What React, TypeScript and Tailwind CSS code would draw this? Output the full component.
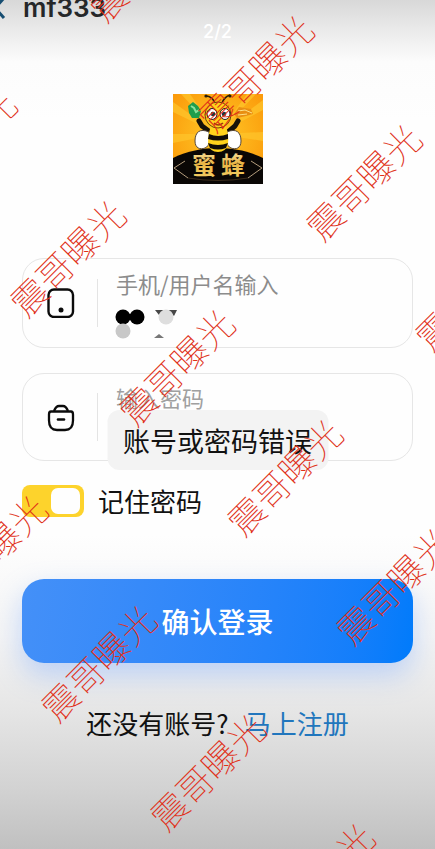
import { useState } from "react";

const watermarkSpots = [
  { x: 145, y: -38 },
  { x: 254, y: 72 },
  { x: 362, y: 181 },
  { x: 471, y: 291 },
  { x: -43, y: 147 },
  { x: 66, y: 257 },
  { x: 175, y: 366 },
  { x: 283, y: 476 },
  { x: 392, y: 585 },
  { x: -12, y: 552 },
  { x: 97, y: 662 },
  { x: 206, y: 771 },
  { x: 315, y: 880 },
];

function Watermarks() {
  return (
    <div aria-hidden="true" className="pointer-events-none absolute inset-0 z-20 overflow-hidden">
      {watermarkSpots.map((spot) => (
        <span
          key={`${spot.x}-${spot.y}`}
          style={{ left: spot.x, top: spot.y }}
          className="absolute -translate-x-1/2 -translate-y-1/2 -rotate-45 text-[36px] leading-none font-thin whitespace-nowrap text-[#e03018]"
        >
          震哥曝光
        </span>
      ))}
    </div>
  );
}

function BeeLogo() {
  return (
    <svg viewBox="0 0 90 90" className="size-[90px]" role="img" aria-label="蜜蜂">
      <defs>
        <radialGradient id="sky" cx="50%" cy="45%" r="65%">
          <stop offset="0" stopColor="#ffc928" />
          <stop offset="1" stopColor="#fb9a0a" />
        </radialGradient>
        <linearGradient id="gold" x1="0" y1="0" x2="0" y2="1">
          <stop offset="0" stopColor="#fff3c4" />
          <stop offset="0.5" stopColor="#e9b545" />
          <stop offset="1" stopColor="#f6d36b" />
        </linearGradient>
      </defs>
      <rect width="90" height="90" fill="url(#sky)" />
      <g fill="#ffc62c" opacity="0.7">
        <path d="M45 40 0 8v10z" />
        <path d="M45 40 8 0h9z" />
        <path d="M45 40 0 40v9z" />
        <path d="M45 40 90 6v10z" />
        <path d="M45 40 74 0h9z" />
        <path d="M45 40 90 38v9z" />
      </g>
      <path d="M0 64C14 57 30 54 45 54s31 3 45 10v26H0z" fill="#0a0705" />
      <path d="M1 74 12 67M1 74l14 10M89 74l-11-7M89 74 75 84" stroke="#b39c7c" fill="none" />
      <path d="M15 84q30 5 60 0" stroke="#3b2c1c" fill="none" />
      <path d="M37 38 29 32 26 27M55 38l7-6 3-5" fill="none" stroke="#171109" strokeWidth="5" strokeLinecap="round" strokeLinejoin="round" />
      <path d="M15 12 20 8l5 4 3 5-2 7-7 0-3-5z" fill="#1f9d4c" />
      <path d="m18 12 3 2 2 4 3-2" fill="none" stroke="#8be29c" strokeWidth="2" />
      <path d="M61 20 66 13 78 15 80 20 73 22 64 24z" fill="#e98f12" />
      <path d="m65 17 7-1 7 3M65 21l9-1" fill="none" stroke="#ffe184" />
      <path d="M42 9C40 4 37 2 33 2M49 9c2-5 5-7 8-8" fill="none" stroke="#2a1d09" strokeWidth="1.6" />
      <circle cx="33" cy="2" r="1.6" fill="#2a1d09" />
      <circle cx="57" cy="2" r="1.6" fill="#2a1d09" />
      <path d="M36 38c-9-4-14 0-14 9 0 7 5 9 10 7 5-2 5-9 4-16zM54 38c9-4 14 0 14 9 0 7-5 9-10 7-5-2-5-9-4-16z" fill="#fff" stroke="#55473a" />
      <path d="M38 32h15q3 10 2 18-2 8-10 8t-10-8q0-10 3-18z" fill="#ffd21c" />
      <path d="M36 40q9 4 19 0v5q-10 3-20 0zM35 49q10 4 20 0l-2 5q-8 3-16 0z" fill="#100c08" />
      <ellipse cx="45" cy="21" rx="13" ry="13" fill="#ffd21c" stroke="#6b4608" />
      <ellipse cx="39" cy="20" rx="5" ry="5.5" fill="#fff" stroke="#1c1c1c" />
      <ellipse cx="52" cy="20" rx="5" ry="5.5" fill="#fff" stroke="#1c1c1c" />
      <circle cx="40" cy="20" r="2.3" fill="#193640" />
      <circle cx="51" cy="20" r="2.3" fill="#193640" />
      <path d="M41 29q4 4 9 0" stroke="#9c3511" fill="none" strokeWidth="1.6" />
      <text x="19" y="80" fontSize="24" fontWeight="700" fill="url(#gold)">蜜</text>
      <text x="48" y="80" fontSize="24" fontWeight="700" fill="url(#gold)">蜂</text>
    </svg>
  );
}

function PhoneIcon() {
  return (
    <svg viewBox="0 0 28 30" className="h-[30px] w-7 shrink-0" fill="none" aria-hidden="true">
      <rect x="1.5" y="1.5" width="24.5" height="27.5" rx="5.5" stroke="#0b0b0b" strokeWidth="2.4" />
      <circle cx="14" cy="22" r="2.5" fill="#0b0b0b" />
    </svg>
  );
}

function LockIcon() {
  return (
    <svg viewBox="0 0 28 30" className="h-[30px] w-7 shrink-0" fill="none" stroke="#0b0b0b" strokeWidth="2.3" aria-hidden="true">
      <path d="M4 9.500h20q2 0 2 3v6q0 9.500-8 9.500h-8q-8 0-8-9.500v-6q0-3 2-3z" strokeLinejoin="round" />
      <path d="M7 9q2-5 5-5h4q3 0 5 5" />
      <path d="M11 17.500h6" strokeLinecap="round" strokeWidth="2.600" />
    </svg>
  );
}

function MaskedName() {
  return (
    <svg viewBox="0 0 66 30" className="pointer-events-none absolute top-[50px] left-[92px] h-[30px] w-[66px]" aria-hidden="true">
      <path d="M8 5h16v5H8z" fill="#000" />
      <circle cx="8" cy="8" r="7.5" fill="#000" />
      <circle cx="22" cy="8" r="7.5" fill="#000" />
      <path d="M40 1h22l-3 6-3-3H46l-2 2z" fill="#474747" />
      <circle cx="51" cy="8" r="7.5" fill="#dedede" />
      <circle cx="8" cy="22" r="7.5" fill="#c8c8c8" />
      <path d="m39 29 5-4 5 4z" fill="#777" />
    </svg>
  );
}

export default function App() {
  const [remember, setRemember] = useState(true);
  return (
    <div className="relative min-h-screen overflow-hidden bg-[linear-gradient(to_bottom,#d8d8d8_0px,#e9e9e9_28px,#fcfcfc_62px,#fefefe_120px,#fefefe_63%,#f4f4f4_75%,#e5e5e5_84%,#d2d2d2_93%,#c0c0c0_100%)] font-['Noto_Sans_CJK_SC','Noto_Sans',sans-serif] text-[#111]">
      <header className="h-[46px] overflow-hidden">
        <div className="-mt-2 flex h-8 items-center">
          <button type="button" aria-label="返回" className="-ml-4 w-[39px]">
            <svg viewBox="0 0 24 24" className="size-6" fill="none" stroke="#174e72" strokeWidth="3" aria-hidden="true">
              <path d="m20 2-9 10 9 10" />
            </svg>
          </button>
          <h1 className="font-['Inter',sans-serif] text-[26px] leading-8 font-semibold text-[#252729]">mf333</h1>
        </div>
        <p className="-mt-1 text-center font-['Inter',sans-serif] text-[18px] leading-6 font-medium text-white">2/2</p>
      </header>

      <main className="px-[22px] pt-12">
        <div className="flex justify-center">
          <BeeLogo />
        </div>

        <form onSubmit={(event) => event.preventDefault()}>
          <div className="relative mt-[74px] flex h-[90px] items-center rounded-[22px] border border-[#e6e6e6] bg-[#fefefe] pl-6">
            <PhoneIcon />
            <div className="ml-[22px] h-12 w-px bg-[#e4e4e4]" />
            <div className="ml-[18px] flex flex-1 flex-col">
              <label htmlFor="account" className="text-[22px] leading-8 text-[#8c8c8c]">手机/用户名输入</label>
              <input id="account" type="text" className="h-10 w-full bg-transparent pr-4 text-xl outline-none" />
            </div>
            <MaskedName />
          </div>

          <div className="relative mt-[25px] flex h-[88px] items-center rounded-[22px] border border-[#e6e6e6] bg-[#fefefe] pl-6">
            <LockIcon />
            <div className="ml-[22px] h-12 w-px bg-[#e4e4e4]" />
            <div className="ml-[18px] flex flex-1 flex-col">
              <label htmlFor="password" className="text-[22px] leading-8 text-[#a0a0a0]">输入密码</label>
              <input id="password" type="password" className="h-10 w-full bg-transparent pr-4 text-xl outline-none" />
            </div>
            <div role="alert" className="absolute top-9 left-1/2 z-10 -translate-x-1/2 rounded-xl bg-[#f3f3f3] px-4 pt-[11px] pb-[9px] text-[27px] leading-10 whitespace-nowrap">
              账号或密码错误
            </div>
          </div>

          <label className="mt-5 flex w-fit items-center gap-[14px] text-[26px] leading-10">
            <input
              type="checkbox"
              checked={remember}
              onChange={(event) => setRemember(event.target.checked)}
              className="peer sr-only"
            />
            <span className="flex h-8 w-[62px] items-center rounded-lg bg-[#c9c9c9] p-1 peer-checked:justify-end peer-checked:bg-[#fdd32c]">
              <span className="h-[26px] w-[29px] rounded-[7px] bg-[#fefefe]" />
            </span>
            记住密码
          </label>

          <button
            type="submit"
            className="mt-[58px] h-[84px] w-full rounded-[22px] bg-linear-100 from-[#4490f8] to-[#007bfb] text-[28px] font-medium text-white shadow-[0_12px_28px_#7eadff73]"
          >
            确认登录
          </button>
        </form>

        <p className="mt-10 flex justify-center gap-4 text-[26px] leading-10">
          <span>还没有账号?</span>
          <a href="#register" className="text-[#2176bd]">马上注册</a>
        </p>
      </main>

      <Watermarks />
    </div>
  );
}
